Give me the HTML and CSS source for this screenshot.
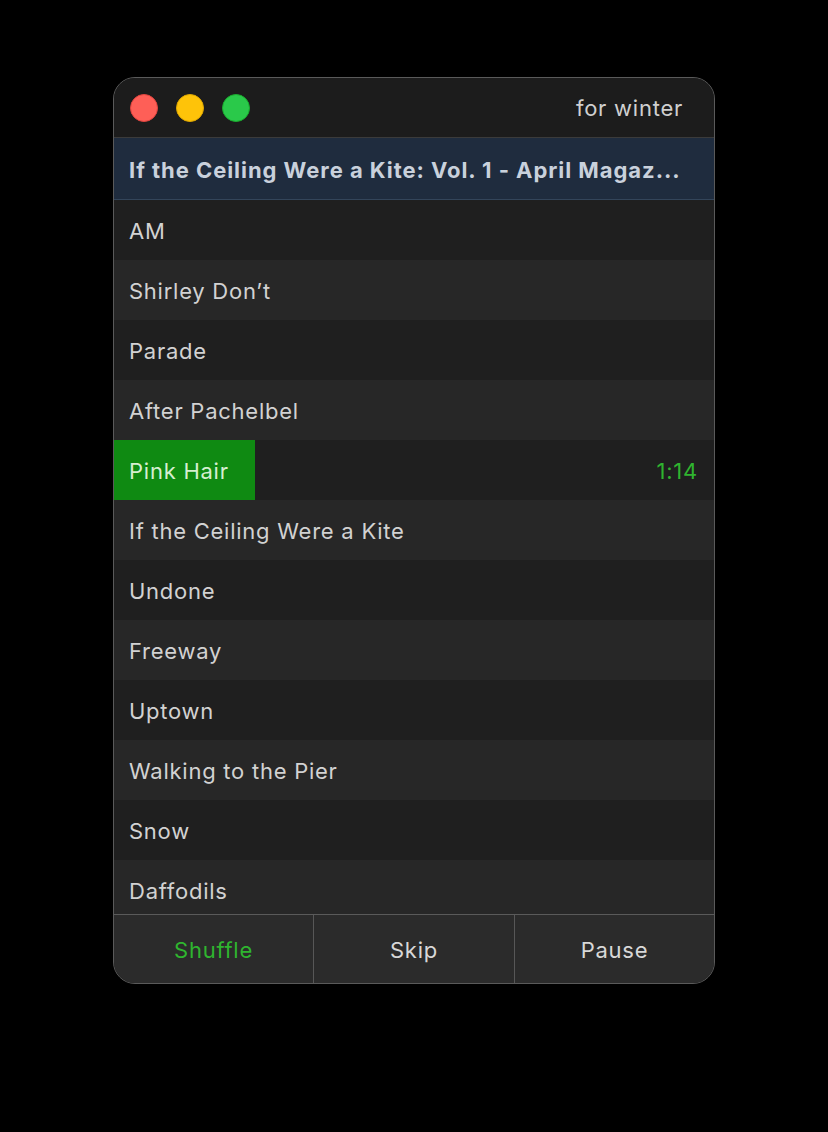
FILE: index.html
```html
<!DOCTYPE html>
<html>
<head>
<meta charset="utf-8">
<link rel="stylesheet" href="styles.css">
</head>
<body>
<div class="window">
  <div class="titlebar">
    <div class="lights">
      <span class="light red"></span>
      <span class="light yellow"></span>
      <span class="light green"></span>
    </div>
    <div class="title">for winter</div>
  </div>
  <div class="album">If the Ceiling Were a Kite: Vol. 1 - April Magaz...</div>
  <div class="list">
    <div class="row">AM</div>
    <div class="row alt">Shirley Don’t</div>
    <div class="row">Parade</div>
    <div class="row alt">After Pachelbel</div>
    <div class="row playing">
      <div class="progress" style="width: 141px;"></div>
      <span class="name">Pink Hair</span>
      <span class="time">1:14</span>
    </div>
    <div class="row alt">If the Ceiling Were a Kite</div>
    <div class="row">Undone</div>
    <div class="row alt">Freeway</div>
    <div class="row">Uptown</div>
    <div class="row alt">Walking to the Pier</div>
    <div class="row">Snow</div>
    <div class="row alt">Daffodils</div>
  </div>
  <div class="footer">
    <div class="btn active">Shuffle</div>
    <div class="btn">Skip</div>
    <div class="btn">Pause</div>
  </div>
</div>
</body>
</html>
```
FILE: styles.css
```css
html, body {
  margin: 0;
  padding: 0;
  background: #000;
}
body {
  font-family: Inter, "Noto Sans", "Liberation Sans", sans-serif;
  letter-spacing: 0.75px;
  padding: 77px 0 0 113px;
}
.window {
  width: 600px;
  height: 905px;
  border: 1px solid #5a5a5a;
  border-radius: 22px;
  overflow: hidden;
  background: #1e1e1e;
  display: flex;
  flex-direction: column;
}
.titlebar {
  height: 59px;
  flex: none;
  background: #1c1c1c;
  border-bottom: 1px solid #3b3b3b;
  display: flex;
  align-items: center;
  justify-content: space-between;
  padding: 0 31px 0 16px;
}
.lights {
  display: flex;
  gap: 18px;
}
.light {
  width: 28px;
  height: 28px;
  border-radius: 50%;
  box-sizing: border-box;
}
.red { background: #fe5f57; border: 1px solid #e0443e; }
.yellow { background: #fec309; border: 1px solid #dfa800; }
.green { background: #2ac94a; border: 1px solid #1aab2e; }
.title {
  color: #d0d0d0;
  font-size: 22px;
}
.album {
  height: 62px;
  box-sizing: border-box;
  padding: 3px 0 0 15px;
  flex: none;
  background: #1f2c3e;
  border-bottom: 1px solid #33455a;
  color: #c9d1dc;
  font-size: 22px;
  font-weight: 700;
  letter-spacing: 0.95px;
  display: flex;
  align-items: center;
  white-space: nowrap;
}
.list {
  flex: 1;
  overflow: hidden;
  display: flex;
  flex-direction: column;
}
.row {
  height: 60px;
  box-sizing: border-box;
  flex: none;
  display: flex;
  align-items: center;
  padding: 1px 16px 0 15px;
  color: #d2d2d2;
  font-size: 22px;
  background: #1f1f1f;
  position: relative;
}
.row.alt {
  background: #272727;
}
.playing {
  justify-content: space-between;
}
.progress {
  position: absolute;
  left: 0;
  top: 0;
  bottom: 0;
  background: #0f8a12;
}
.playing .name {
  position: relative;
  color: #d6efd0;
}
.playing .time {
  position: relative;
  color: #2fb42f;
}
.footer {
  height: 68px;
  flex: none;
  border-top: 1px solid #5a5a5a;
  background: #2b2b2b;
  display: grid;
  grid-template-columns: 199px 201px 1fr;
}
.btn {
  display: flex;
  align-items: center;
  justify-content: center;
  padding-top: 2px;
  color: #d8d8d8;
  font-size: 22px;
  border-left: 1px solid #575757;
}
.btn:first-child {
  border-left: none;
}
.btn.active {
  color: #2fb52f;
}
```
